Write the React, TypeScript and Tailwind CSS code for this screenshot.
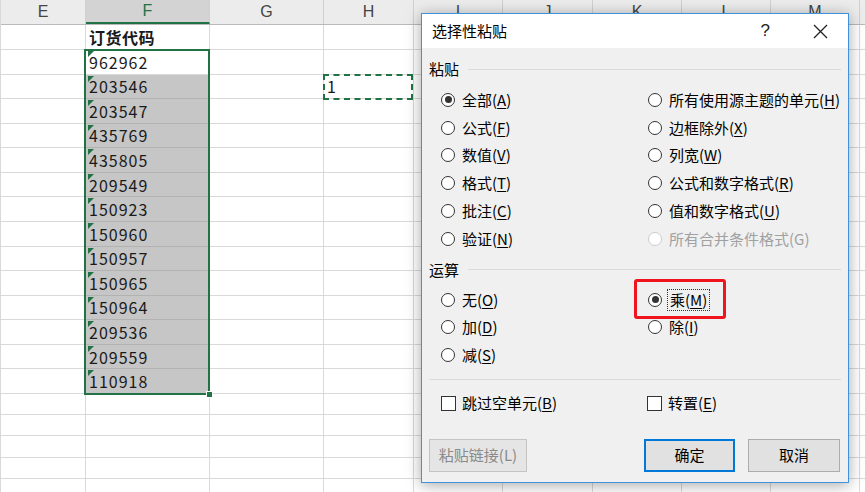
import React from "react";

const COLS = [
  { k: "E", w: "w-[85px]" },
  { k: "F", w: "w-[124px]" },
  { k: "G", w: "w-[114px]" },
  { k: "H", w: "w-[90px]" },
  { k: "I", w: "w-[89px]" },
  { k: "J", w: "w-[90px]" },
  { k: "K", w: "w-[89px]" },
  { k: "L", w: "w-[89px]" },
  { k: "M", w: "w-[89px]" },
  { k: "", w: "w-[80px]" },
];

const CODES = [
  "962962", "203546", "203547", "435769", "435805", "209549", "150923",
  "150960", "150957", "150965", "150964", "209536", "209559", "110918",
];

function HeaderRow() {
  return (
    <div className="flex h-[25px] shrink-0 border-b border-[#b9b9b9] bg-[#ececec]">
      {COLS.map((c, i) => (
        <div
          key={i}
          className={`${c.w} shrink-0 flex items-center justify-center border-r border-[#d0d0d0] font-['Liberation_Sans',sans-serif] text-[16px] ${
            c.k === "F" ? "bg-[#d3d3d3] text-[#217346] border-b-2 border-b-[#217346]" : "text-[#444]"
          }`}
        >
          {c.k}
        </div>
      ))}
    </div>
  );
}

function Row({ h, f, hval, selected, bold }: { h: string; f?: string; hval?: string; selected?: boolean; bold?: boolean }) {
  return (
    <div className={`flex ${h} shrink-0`}>
      {COLS.map((c, idx) => {
        const isF = c.k === "F";
        const content = isF ? f : c.k === "H" ? hval : undefined;
        return (
          <div
            key={idx}
            className={`${c.w} relative shrink-0 flex items-center border-r border-b ${
              isF && selected ? "bg-[#c6c6c6] border-b-[#b2b2b2] border-r-[#d4d4d4]" : "border-[#d9d9d9]"
            }`}
          >
            {isF && f && !bold && (
              <span className="absolute left-[2px] top-[1px] h-0 w-0 border-t-[6px] border-r-[6px] border-t-[#217346] border-r-transparent" />
            )}
            {content && (
              <span
                className={`pl-[3px] text-[16px] text-[#1a1a1a] ${bold ? "font-bold tracking-[0.5px]" : "tracking-[1px]"}`}
              >
                {content}
              </span>
            )}
          </div>
        );
      })}
    </div>
  );
}

function Key({ k }: { k: string }) {
  return <span className="underline underline-offset-2 decoration-1">{k}</span>;
}

function Radio({ label, k, checked, disabled, focus }: { label: string; k: string; checked?: boolean; disabled?: boolean; focus?: boolean }) {
  return (
    <div className="flex h-[27.8px] items-center gap-[7px]">
      <span
        className={`flex h-[14px] w-[14px] items-center justify-center rounded-full border bg-white ${
          disabled ? "border-[#cccccc]" : "border-[#333]"
        }`}
      >
        {checked && <span className="h-[7px] w-[7px] rounded-full bg-[#333]" />}
      </span>
      <span
        className={`text-[15px] leading-[18px] ${disabled ? "text-[#a0a0a0]" : "text-black"} ${
          focus ? "outline outline-1 outline-dotted outline-[#333] outline-offset-[1px] px-px" : ""
        }`}
      >
        {label}({disabled ? k : <Key k={k} />})
      </span>
    </div>
  );
}

function Check({ label, k }: { label: string; k: string }) {
  return (
    <div className="flex h-[28px] items-center gap-[6px]">
      <span className="h-[15px] w-[15px] border border-[#333] bg-white" />
      <span className="text-[15px] text-black">
        {label}(<Key k={k} />)
      </span>
    </div>
  );
}

function Group({ title, className }: { title: string; className?: string }) {
  return (
    <div className={`flex h-[20px] items-center gap-[9px] ${className ?? ""}`}>
      <span className="text-[15px] text-black">{title}</span>
      <div className="h-px flex-1 bg-[#dadada]" />
    </div>
  );
}

function PasteDialog() {
  return (
    <div className="absolute left-[421px] top-[13px] flex h-[470px] w-[428px] flex-col border border-[#3f93dc] bg-[#f0f0f0] shadow-[0_2px_14px_rgba(0,0,0,0.35)]">
      <div className="flex h-[34px] shrink-0 items-center bg-white pl-[10px]">
        <span className="text-[15px] text-black">选择性粘贴</span>
        <span className="ml-auto mr-[43px] font-['Liberation_Sans',sans-serif] text-[17px] text-[#222]">?</span>
        <svg width="15" height="15" viewBox="0 0 15 15" className="mr-[20px]">
          <path d="M1 1 L14 14 M14 1 L1 14" stroke="#222" strokeWidth="1.3" />
        </svg>
      </div>
      <div className="flex flex-1 flex-col px-[7px]">
        <Group title="粘贴" className="mt-[11px]" />
        <div className="mt-[7px] grid grid-cols-[207px_1fr] pl-[12px]">
          <Radio label="全部" k="A" checked />
          <Radio label="所有使用源主题的单元" k="H" />
          <Radio label="公式" k="F" />
          <Radio label="边框除外" k="X" />
          <Radio label="数值" k="V" />
          <Radio label="列宽" k="W" />
          <Radio label="格式" k="T" />
          <Radio label="公式和数字格式" k="R" />
          <Radio label="批注" k="C" />
          <Radio label="值和数字格式" k="U" />
          <Radio label="验证" k="N" />
          <Radio label="所有合并条件格式" k="G" disabled />
        </div>
        <Group title="运算" className="mt-[7px]" />
        <div className="mt-[6px] grid grid-cols-[207px_1fr] pl-[12px]">
          <Radio label="无" k="O" />
          <Radio label="乘" k="M" checked focus />
          <Radio label="加" k="D" />
          <Radio label="除" k="I" />
          <Radio label="减" k="S" />
        </div>
        <div className="mt-[10px] h-px bg-[#dadada]" />
        <div className="mt-[9px] grid grid-cols-[206px_1fr] pl-[12px]">
          <Check label="跳过空单元" k="B" />
          <Check label="转置" k="E" />
        </div>
        <div className="mt-[22px] flex items-center">
          <button className="h-[33px] w-[98px] border border-[#c4c4c4] bg-[#e5e5e5] text-[15px] text-[#8a8a8a]">
            粘贴链接(L)
          </button>
          <button className="ml-auto h-[33px] w-[91px] border-2 border-[#0078d7] bg-[#e1e1e1] text-[15px] text-black">
            确定
          </button>
          <button className="ml-[13px] mr-px h-[33px] w-[92px] border border-[#adadad] bg-[#e1e1e1] text-[15px] text-black">
            取消
          </button>
        </div>
      </div>
      <div className="pointer-events-none absolute left-[212px] top-[265px] h-[40px] w-[92px] rounded-[3px] border-[3px] border-[#f0141e]" />
    </div>
  );
}

export default function App() {
  return (
    <div className="relative h-[492px] w-[865px] overflow-hidden bg-white font-['Noto_Sans_CJK_SC',sans-serif]">
      <div className="flex flex-col border-l border-[#d9d9d9]">
        <HeaderRow />
        <Row h="h-[25px]" f="订货代码" bold />
        {CODES.map((code, i) => (
          <Row key={code + i} h="h-[24.57px]" f={code} hval={i === 1 ? "1" : undefined} selected={i > 0} />
        ))}
        {Array.from({ length: 6 }).map((_, i) => (
          <Row key={"e" + i} h="h-[21.3px]" />
        ))}
      </div>
      {/* selection range */}
      <div className="pointer-events-none absolute left-[84px] top-[49px] h-[346px] w-[126px] border-2 border-[#217346]" />
      <div className="pointer-events-none absolute left-[206px] top-[391px] h-[7px] w-[7px] border border-white bg-[#217346]" />
      {/* copy marquee */}
      <div className="pointer-events-none absolute left-[323px] top-[74px] h-[26px] w-[90px] border-2 border-dashed border-[#217346]" />
      <PasteDialog />
    </div>
  );
}
